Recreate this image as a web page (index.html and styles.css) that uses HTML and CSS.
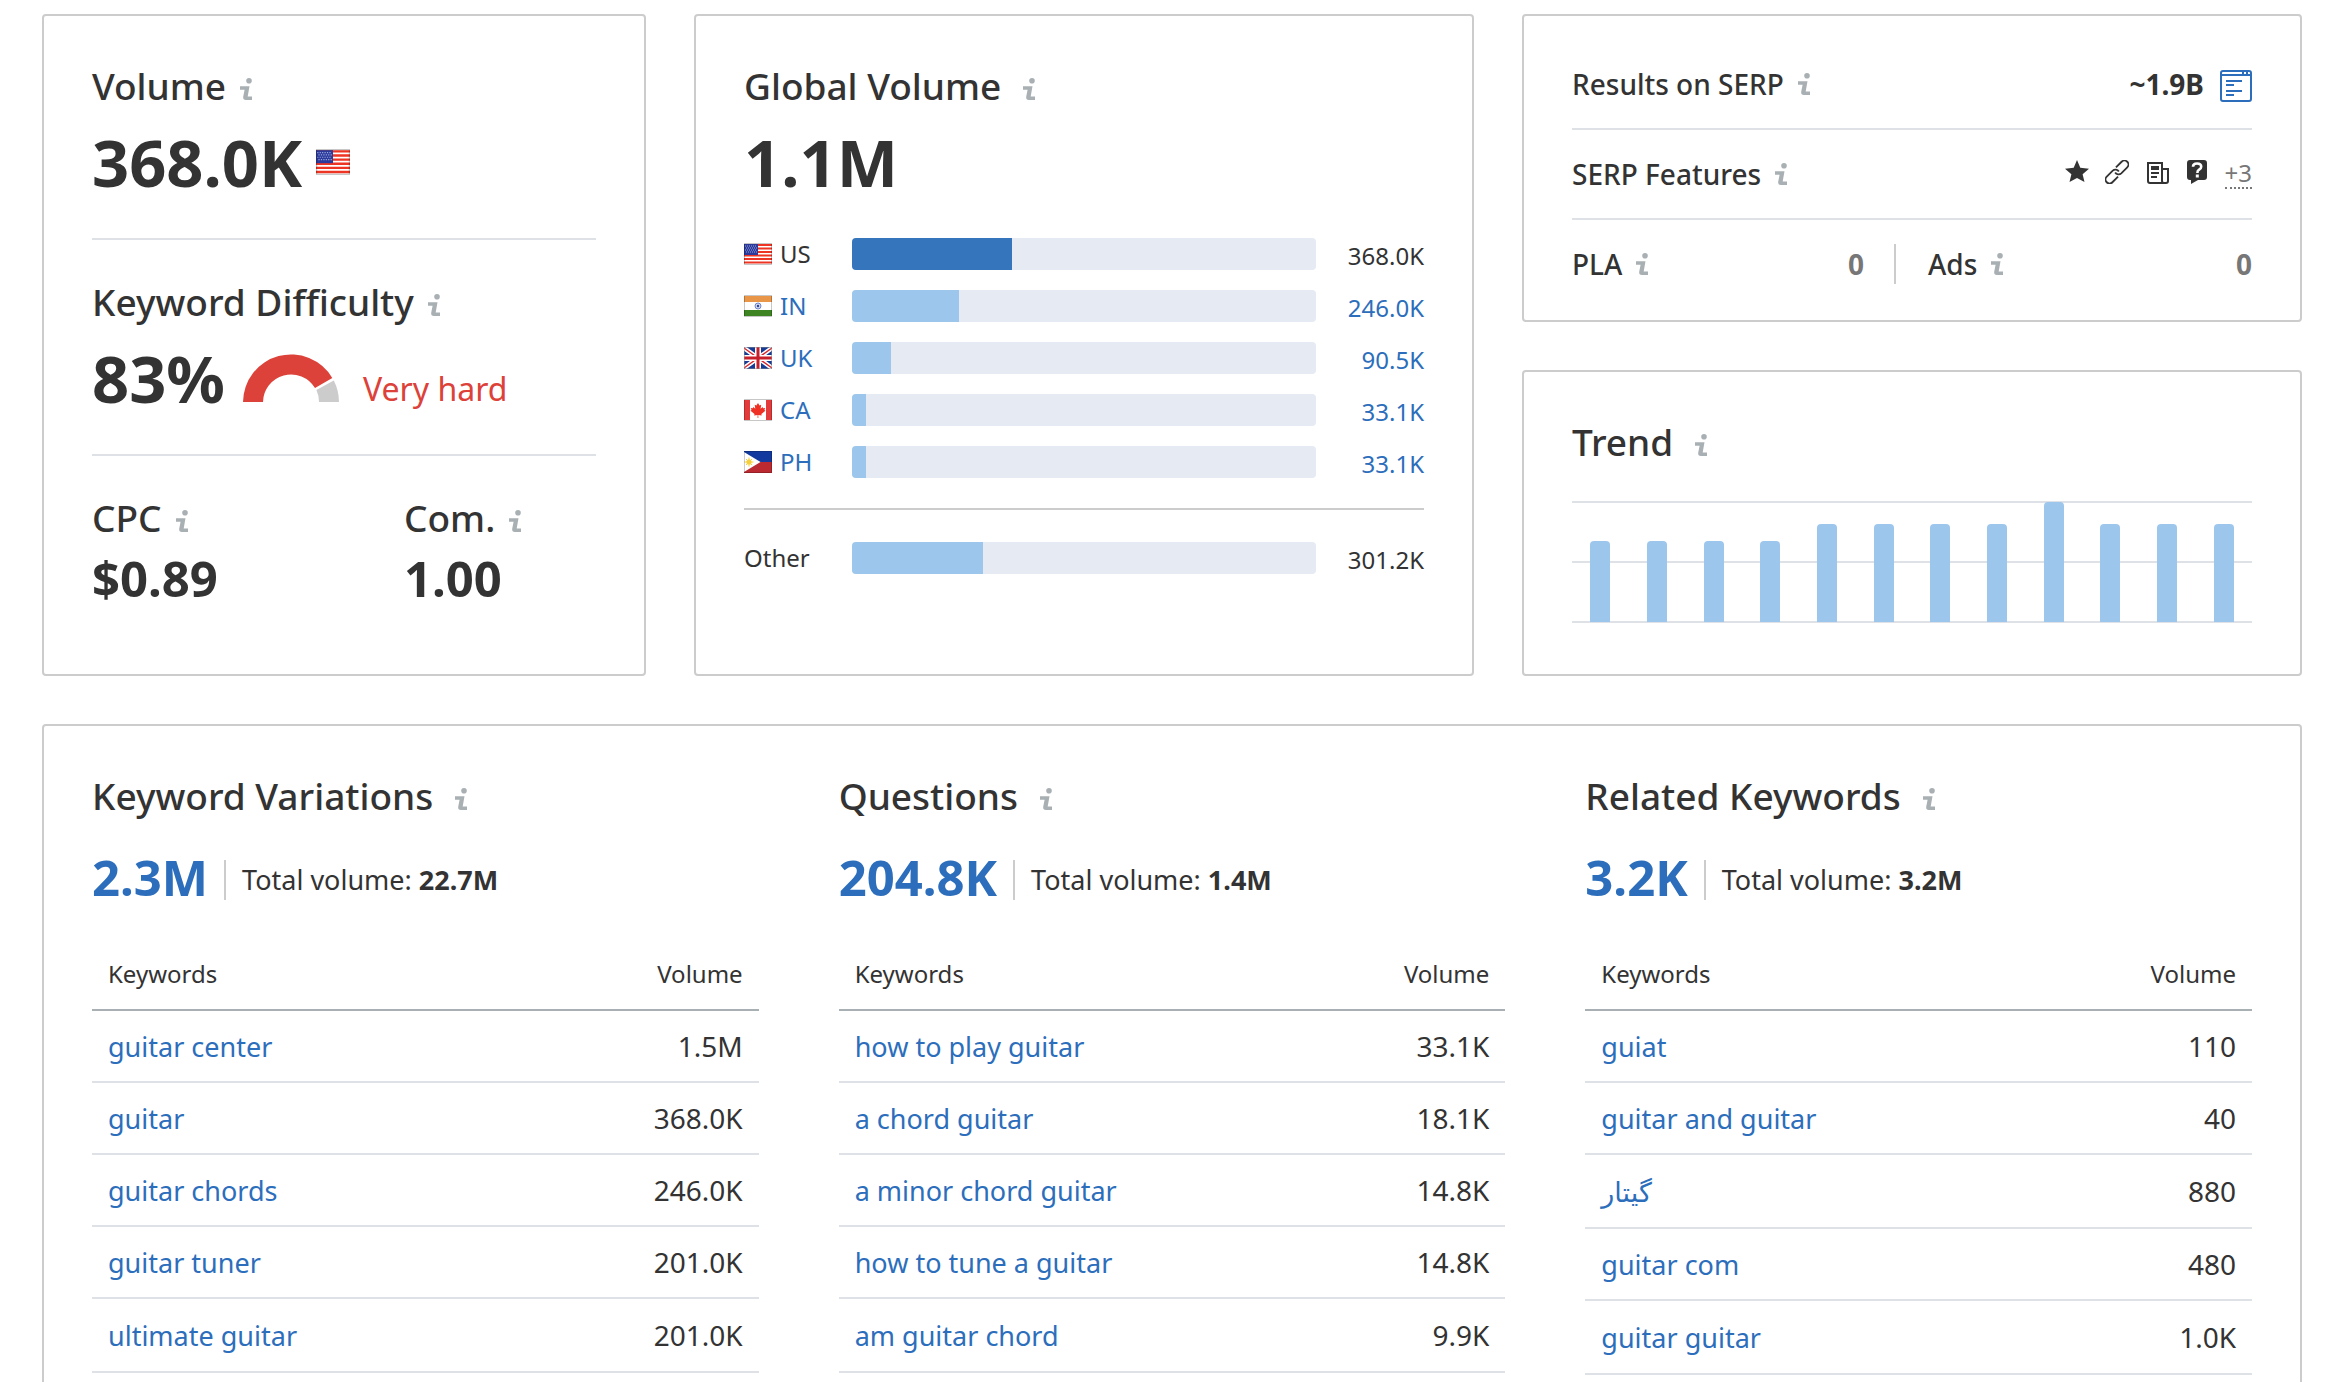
FILE: index.html
```html
<!DOCTYPE html>
<html lang="en">
<head>
<meta charset="utf-8">
<title>Keyword Overview</title>
<link rel="stylesheet" href="styles.css">
</head>
<body>
<svg class="sprite" aria-hidden="true">
  <symbol id="info" viewBox="0 0 12 22"><circle cx="9" cy="2.8" r="2.8"/><path d="M0 8.3H9.5L7.7 18.6H12V22H6Q2.8 22 3.2 18.8L4.6 11.7H0Z"/></symbol>
  <symbol id="flag-us" viewBox="0 0 28 22" preserveAspectRatio="none">
    <path fill="#fff" d="M0 0h28v22H0z"/>
    <path fill="#ee3524" d="M0 1h28v2H0zM0 4.500h28v2H0zM0 8h28v2H0zM0 11.500h28v2H0zM0 15h28v2H0zM0 18.500h28v2H0z"/>
    <path fill="#2b3a9b" d="M0 1h14v11H0z"/>
    <path stroke="#9aa4dc" stroke-width="1" stroke-dasharray="1 1" d="M1 3h12M2 5h11M1 7h12M2 9h11"/>
    <path fill="none" stroke="#000" stroke-opacity=".22" d="M.5 .5h27v21H.5z"/>
  </symbol>
  <symbol id="flag-in" viewBox="0 0 28 22">
    <path fill="#fff" d="M0 0h28v22H0z"/><path fill="#ea9648" d="M0 1h28v6H0z"/><path fill="#3f8423" d="M0 15h28v6H0z"/>
    <circle cx="14" cy="11" r="3" fill="#cfd6ee" stroke="#7286c8"/><circle cx="14" cy="11" r="1.200" fill="#2a449b"/>
    <path fill="none" stroke="#000" stroke-opacity=".22" d="M.5 .5h27v21H.5z"/>
  </symbol>
  <symbol id="flag-uk" viewBox="0 0 28 22">
    <path fill="#173a94" d="M0 0h28v22H0z"/>
    <path stroke="#fff" stroke-width="4.500" d="M0 1l28 20M28 1L0 21"/><path stroke="#d8232a" stroke-width="1.400" d="M0 1l28 20M28 1L0 21"/>
    <path stroke="#fff" stroke-width="6" d="M14 0v22M0 11h28"/><path stroke="#c8202a" stroke-width="3" d="M14 0v22M0 11h28"/>
    <path fill="none" stroke="#888" stroke-opacity=".5" d="M.5 .5h27v21H.5z"/>
  </symbol>
  <symbol id="flag-ca" viewBox="0 0 28 22">
    <path fill="#fff" d="M0 0h28v22H0z"/><path fill="#e33a3c" d="M0 1h6v20H0zM22 1h6v20h-6z"/>
    <path fill="#ee3124" d="M14 4l1.500 2.500 1.700-.7-.6 4 2-1.800.5 1.300 2-.3-.7 2 1 .8-4 3.200.3 1.500-3.400-.4V19h-.7v-2.900l-3.400.4.300-1.500-4-3.200 1-.8-.7-2 2 .3.500-1.300 2 1.800-.6-4 1.700.7z"/>
    <path fill="none" stroke="#000" stroke-opacity=".22" d="M.5 .5h27v21H.5z"/>
  </symbol>
  <symbol id="flag-ph" viewBox="0 0 28 22">
    <path fill="#123a9e" d="M0 0h28v11H0z"/><path fill="#bb2a30" d="M0 11h28v11H0z"/><path fill="#fff" d="M0 1l16.500 10L0 21z"/>
    <circle cx="5" cy="11" r="2.600" fill="#f6cf3c"/><path stroke="#f6cf3c" d="M5 6.500v9M.5 11h9M2 8l6 6M8 8l-6 6"/>
    <path fill="none" stroke="#000" stroke-opacity=".2" d="M.5 .5h27v21H.5z"/>
  </symbol>
</svg>

<main class="page">
  <section class="card metrics">
    <div class="metric">
      <h2 class="title">Volume <svg class="info"><use href="#info"/></svg></h2>
      <div class="figure">368.0K <svg class="flag flag-lg"><use href="#flag-us"/></svg></div>
    </div>
    <div class="metric">
      <h2 class="title">Keyword Difficulty <svg class="info"><use href="#info"/></svg></h2>
      <div class="figure">83%
        <svg class="gauge" viewBox="0 0 96 48"><path fill="#dc4239" d="M0 48A48 48 0 0 1 89.300 24L72 34A28 28 0 0 0 20 48Z"/><path fill="#ccc" d="M90.800 26.400A48 48 0 0 1 96 48H76A28 28 0 0 0 73.400 36Z"/></svg>
        <span class="level">Very hard</span>
      </div>
    </div>
    <div class="metric pair">
      <div>
        <h2 class="title">CPC <svg class="info"><use href="#info"/></svg></h2>
        <div class="figure-sm">$0.89</div>
      </div>
      <div>
        <h2 class="title">Com. <svg class="info"><use href="#info"/></svg></h2>
        <div class="figure-sm">1.00</div>
      </div>
    </div>
  </section>

  <section class="card global">
    <h2 class="title wide">Global Volume <svg class="info"><use href="#info"/></svg></h2>
    <div class="figure">1.1M</div>
    <ul class="countries">
      <li class="country"><span class="place"><svg class="flag"><use href="#flag-us"/></svg>US</span><span class="track"><span class="fill current" style="width:34.5%"></span></span><span class="amount">368.0K</span></li>
      <li class="country"><a class="place" href="#in"><svg class="flag"><use href="#flag-in"/></svg>IN</a><span class="track"><span class="fill" style="width:23%"></span></span><a class="amount" href="#in">246.0K</a></li>
      <li class="country"><a class="place" href="#uk"><svg class="flag"><use href="#flag-uk"/></svg>UK</a><span class="track"><span class="fill" style="width:8.5%"></span></span><a class="amount" href="#uk">90.5K</a></li>
      <li class="country"><a class="place" href="#ca"><svg class="flag"><use href="#flag-ca"/></svg>CA</a><span class="track"><span class="fill" style="width:3.1%"></span></span><a class="amount" href="#ca">33.1K</a></li>
      <li class="country"><a class="place" href="#ph"><svg class="flag"><use href="#flag-ph"/></svg>PH</a><span class="track"><span class="fill" style="width:3.1%"></span></span><a class="amount" href="#ph">33.1K</a></li>
    </ul>
    <div class="country other"><span class="place">Other</span><span class="track"><span class="fill" style="width:28.2%"></span></span><span class="amount">301.2K</span></div>
  </section>

  <div class="side">
    <section class="card serp">
      <div class="serp-row">
        <h3 class="label">Results on SERP <svg class="info"><use href="#info"/></svg></h3>
        <div class="results">~1.9B
          <a class="serp-link" href="#serp" aria-label="View SERP"><svg viewBox="0 0 32 32" fill="none" stroke="#2c6ebb" stroke-width="2"><rect x="1" y="1" width="30" height="30" rx="2"/><path d="M1 5h30M23 1v4M27 1v4M6 11h16M6 15h8M6 21h16M6 25h8"/></svg></a>
        </div>
      </div>
      <div class="serp-row">
        <h3 class="label">SERP Features <svg class="info"><use href="#info"/></svg></h3>
        <div class="features">
          <svg viewBox="0 0 24 24" fill="#333"><path d="M12 0l3.300 7.800L24 8.700l-6.400 5.600L19.500 22 12 18 4.500 22l1.900-7.700L0 8.700l8.700-.9z"/></svg>
          <svg viewBox="0 0 24 24" fill="none" stroke="#333" stroke-width="1.800"><g transform="rotate(-45 12 12)"><path d="M9.500 16H1.500A4 4 0 0 1 1.500 8H10A4 4 0 0 1 13.600 13"/><path d="M14.500 8H22.500A4 4 0 0 1 22.500 16H14A4 4 0 0 1 10.400 11"/></g></svg>
          <svg viewBox="0 0 24 24" fill="none" stroke="#333" stroke-width="2"><path d="M17 3H3v18q0 2 2 2h16q2 0 2-2V9h-6zM17 3v18q0 2 2 2"/><path stroke-width="4" d="M6 8h8"/><path d="M6 13h8M6 17h6"/></svg>
          <svg viewBox="0 0 24 24"><path fill="#333" d="M5 0h14q3 0 3 3v14q0 3-3 3h-6l-7 4v-4H5q-3 0-3-3V3q0-3 3-3z"/><path fill="none" stroke="#fff" stroke-width="2.600" d="M8 6.800q0-3.300 4-3.300 4.200 0 4.200 3.200 0 2-2.200 3-1.600.8-1.600 3.300"/><path fill="#fff" d="M10.800 14.500h3v3h-3z"/></svg>
          <button class="more" type="button">+3</button>
        </div>
      </div>
      <div class="serp-row split">
        <div class="ads"><h3 class="label">PLA <svg class="info"><use href="#info"/></svg></h3><span class="count">0</span></div>
        <div class="ads"><h3 class="label">Ads <svg class="info"><use href="#info"/></svg></h3><span class="count">0</span></div>
      </div>
    </section>

    <section class="card trend">
      <h2 class="title wide">Trend <svg class="info"><use href="#info"/></svg></h2>
      <div class="chart">
        <span class="bar" style="height:67.5%"></span><span class="bar" style="height:67.5%"></span><span class="bar" style="height:67.5%"></span><span class="bar" style="height:67.5%"></span><span class="bar" style="height:82%"></span><span class="bar" style="height:82%"></span><span class="bar" style="height:82%"></span><span class="bar" style="height:82%"></span><span class="bar" style="height:100%"></span><span class="bar" style="height:82%"></span><span class="bar" style="height:82%"></span><span class="bar" style="height:82%"></span>
      </div>
    </section>
  </div>

  <section class="card ideas">
    <div class="idea">
      <h2 class="title wide">Keyword Variations <svg class="info"><use href="#info"/></svg></h2>
      <div class="summary"><a class="found" href="#variations">2.3M</a><span class="total">Total volume: <b>22.7M</b></span></div>
      <table class="keywords">
        <thead><tr><th>Keywords</th><th>Volume</th></tr></thead>
        <tbody>
          <tr><td><a href="#k">guitar center</a></td><td>1.5M</td></tr>
          <tr><td><a href="#k">guitar</a></td><td>368.0K</td></tr>
          <tr><td><a href="#k">guitar chords</a></td><td>246.0K</td></tr>
          <tr><td><a href="#k">guitar tuner</a></td><td>201.0K</td></tr>
          <tr><td><a href="#k">ultimate guitar</a></td><td>201.0K</td></tr>
        </tbody>
      </table>
    </div>
    <div class="idea">
      <h2 class="title wide">Questions <svg class="info"><use href="#info"/></svg></h2>
      <div class="summary"><a class="found" href="#questions">204.8K</a><span class="total">Total volume: <b>1.4M</b></span></div>
      <table class="keywords">
        <thead><tr><th>Keywords</th><th>Volume</th></tr></thead>
        <tbody>
          <tr><td><a href="#k">how to play guitar</a></td><td>33.1K</td></tr>
          <tr><td><a href="#k">a chord guitar</a></td><td>18.1K</td></tr>
          <tr><td><a href="#k">a minor chord guitar</a></td><td>14.8K</td></tr>
          <tr><td><a href="#k">how to tune a guitar</a></td><td>14.8K</td></tr>
          <tr><td><a href="#k">am guitar chord</a></td><td>9.9K</td></tr>
        </tbody>
      </table>
    </div>
    <div class="idea">
      <h2 class="title wide">Related Keywords <svg class="info"><use href="#info"/></svg></h2>
      <div class="summary"><a class="found" href="#related">3.2K</a><span class="total">Total volume: <b>3.2M</b></span></div>
      <table class="keywords">
        <thead><tr><th>Keywords</th><th>Volume</th></tr></thead>
        <tbody>
          <tr><td><a href="#k">guiat</a></td><td>110</td></tr>
          <tr><td><a href="#k">guitar and guitar</a></td><td>40</td></tr>
          <tr class="rtl-word"><td><a href="#k" lang="fa">گیتار</a></td><td>880</td></tr>
          <tr><td><a href="#k">guitar com</a></td><td>480</td></tr>
          <tr><td><a href="#k">guitar guitar</a></td><td>1.0K</td></tr>
        </tbody>
      </table>
    </div>
  </section>
</main>
</body>
</html>
```
FILE: styles.css
```css
* { box-sizing: border-box; }

body {
  margin: 0;
  background: #fff;
  color: #333;
  font-family: "Noto Sans", "DejaVu Sans", sans-serif;
  font-size: 28px;
  line-height: 40px;
}

h2, h3, ul { margin: 0; padding: 0; }
a { color: #2c6ebb; text-decoration: none; }

.sprite { position: absolute; width: 0; height: 0; }

.page {
  display: grid;
  grid-template-columns: 604fr 780fr 780fr;
  gap: 48px;
  height: 100vh;
  overflow: hidden;
  padding: 14px 34px 0 42px;
  align-content: start;
}

.card {
  border: 2px solid #ccc;
  border-radius: 4px;
  padding: 48px 48px 0;
}

.title {
  display: flex;
  align-items: center;
  gap: 14px;
  font-size: 37px;
  font-weight: 500;
  line-height: 44px;
  white-space: nowrap;
}
.title.wide { gap: 22px; }

.info {
  width: 12px;
  height: 22px;
  flex: none;
  fill: #a9b0b3;
}
.title .info { margin-top: 6px; }

.figure {
  display: flex;
  align-items: center;
  margin-top: 14px;
  font-size: 65px;
  font-weight: 700;
  line-height: 80px;
}
.figure-sm {
  margin-top: 8px;
  font-size: 49px;
  font-weight: 700;
  line-height: 60px;
}

.flag { width: 28px; height: 22px; flex: none; }
.flag-lg { width: 34px; height: 26px; margin-left: 14px; }

/* Metrics */
.metric + .metric {
  margin-top: 36px;
  border-top: 2px solid #dee2e6;
  padding-top: 40px;
}
.pair {
  display: grid;
  grid-template-columns: 13fr 8fr;
  padding-bottom: 66px;
}
.gauge { width: 96px; height: 48px; margin-left: 18px; }
.level {
  margin-left: 24px;
  padding-top: 22px;
  color: #dc4239;
  font-size: 32px;
  font-weight: 400;
  line-height: 44px;
}

/* Global volume */
.countries {
  display: grid;
  gap: 20px;
  margin-top: 36px;
  list-style: none;
}
.country {
  display: grid;
  grid-template-columns: 108px 1fr 108px;
  align-items: center;
  font-size: 24px;
  line-height: 32px;
}
.place { display: flex; align-items: center; gap: 8px; }
.track {
  display: flex;
  height: 32px;
  border-radius: 4px;
  background: #e6ebf3;
  overflow: hidden;
}
.fill { background: #9dc6ec; }
.fill.current { background: #3575bb; }
.amount { padding-top: 4px; line-height: 28px; text-align: right; }
.other {
  margin-top: 30px;
  border-top: 2px solid #ccc;
  padding-top: 32px;
}

/* SERP */
.side { display: flex; flex-direction: column; gap: 48px; }
.serp { padding-top: 24px; padding-bottom: 12px; }
.serp-row {
  display: flex;
  align-items: center;
  justify-content: space-between;
  height: 88px;
}
.serp-row + .serp-row {
  height: 90px;
  border-top: 2px solid #dee2e6;
}
.label {
  display: flex;
  align-items: center;
  gap: 14px;
  font-size: 28px;
  font-weight: 500;
}
.results {
  display: flex;
  align-items: center;
  gap: 16px;
  font-weight: 700;
}
.serp-link { display: flex; padding-top: 3px; }
.serp-link svg { width: 32px; height: 32px; }
.features { display: flex; align-items: center; gap: 16px; }
.features svg { width: 24px; height: 24px; margin-bottom: 4px; }
.more {
  border: 0;
  border-bottom: 2px dotted #777;
  padding: 0;
  background: none;
  color: #777;
  font: inherit;
  font-size: 24px;
  line-height: 28px;
}
.serp-row.split {
  display: grid;
  grid-template-columns: 1fr 1fr;
  gap: 32px;
}
.ads {
  display: flex;
  align-items: center;
  justify-content: space-between;
}
.ads:first-child { border-right: 2px solid #ccc; padding-right: 30px; }
.count { color: #777; font-weight: 700; }

/* Trend */
.trend { flex: 1; }
.chart {
  display: grid;
  grid-template-columns: repeat(12, 1fr);
  align-items: end;
  justify-items: center;
  height: 122px;
  margin-top: 37px;
  padding: 1px 0;
  background: repeating-linear-gradient(#dee2e6 0 2px, transparent 2px 60px);
}
.bar { width: 20px; border-radius: 4px 4px 0 0; background: #9dc6ec; }

/* Keyword ideas */
.ideas {
  grid-column: 1 / -1;
  display: grid;
  grid-template-columns: repeat(3, 1fr);
  gap: 80px;
  padding-bottom: 48px;
}
.summary { display: flex; align-items: center; margin-top: 32px; }
.found {
  padding-bottom: 6px;
  font-size: 49px;
  font-weight: 700;
  line-height: 54px;
}
.total {
  margin-left: 16px;
  border-left: 2px solid #ccc;
  padding-left: 16px;
  font-size: 27px;
}
.keywords {
  width: 100%;
  margin-top: 28px;
  border-collapse: collapse;
}
.keywords th {
  height: 72px;
  padding: 0 16px;
  border-bottom: 2px solid #a9b0b3;
  font-size: 24px;
  font-weight: 400;
  text-align: left;
}
.keywords td {
  height: 72px;
  padding: 0 16px;
  border-bottom: 2px solid #dee2e6;
}
.keywords td a { font-size: 27px; }
.keywords .rtl-word td,
.keywords tr:last-child td { height: 74px; }
.keywords th:last-child, .keywords td:last-child { text-align: right; }
```
